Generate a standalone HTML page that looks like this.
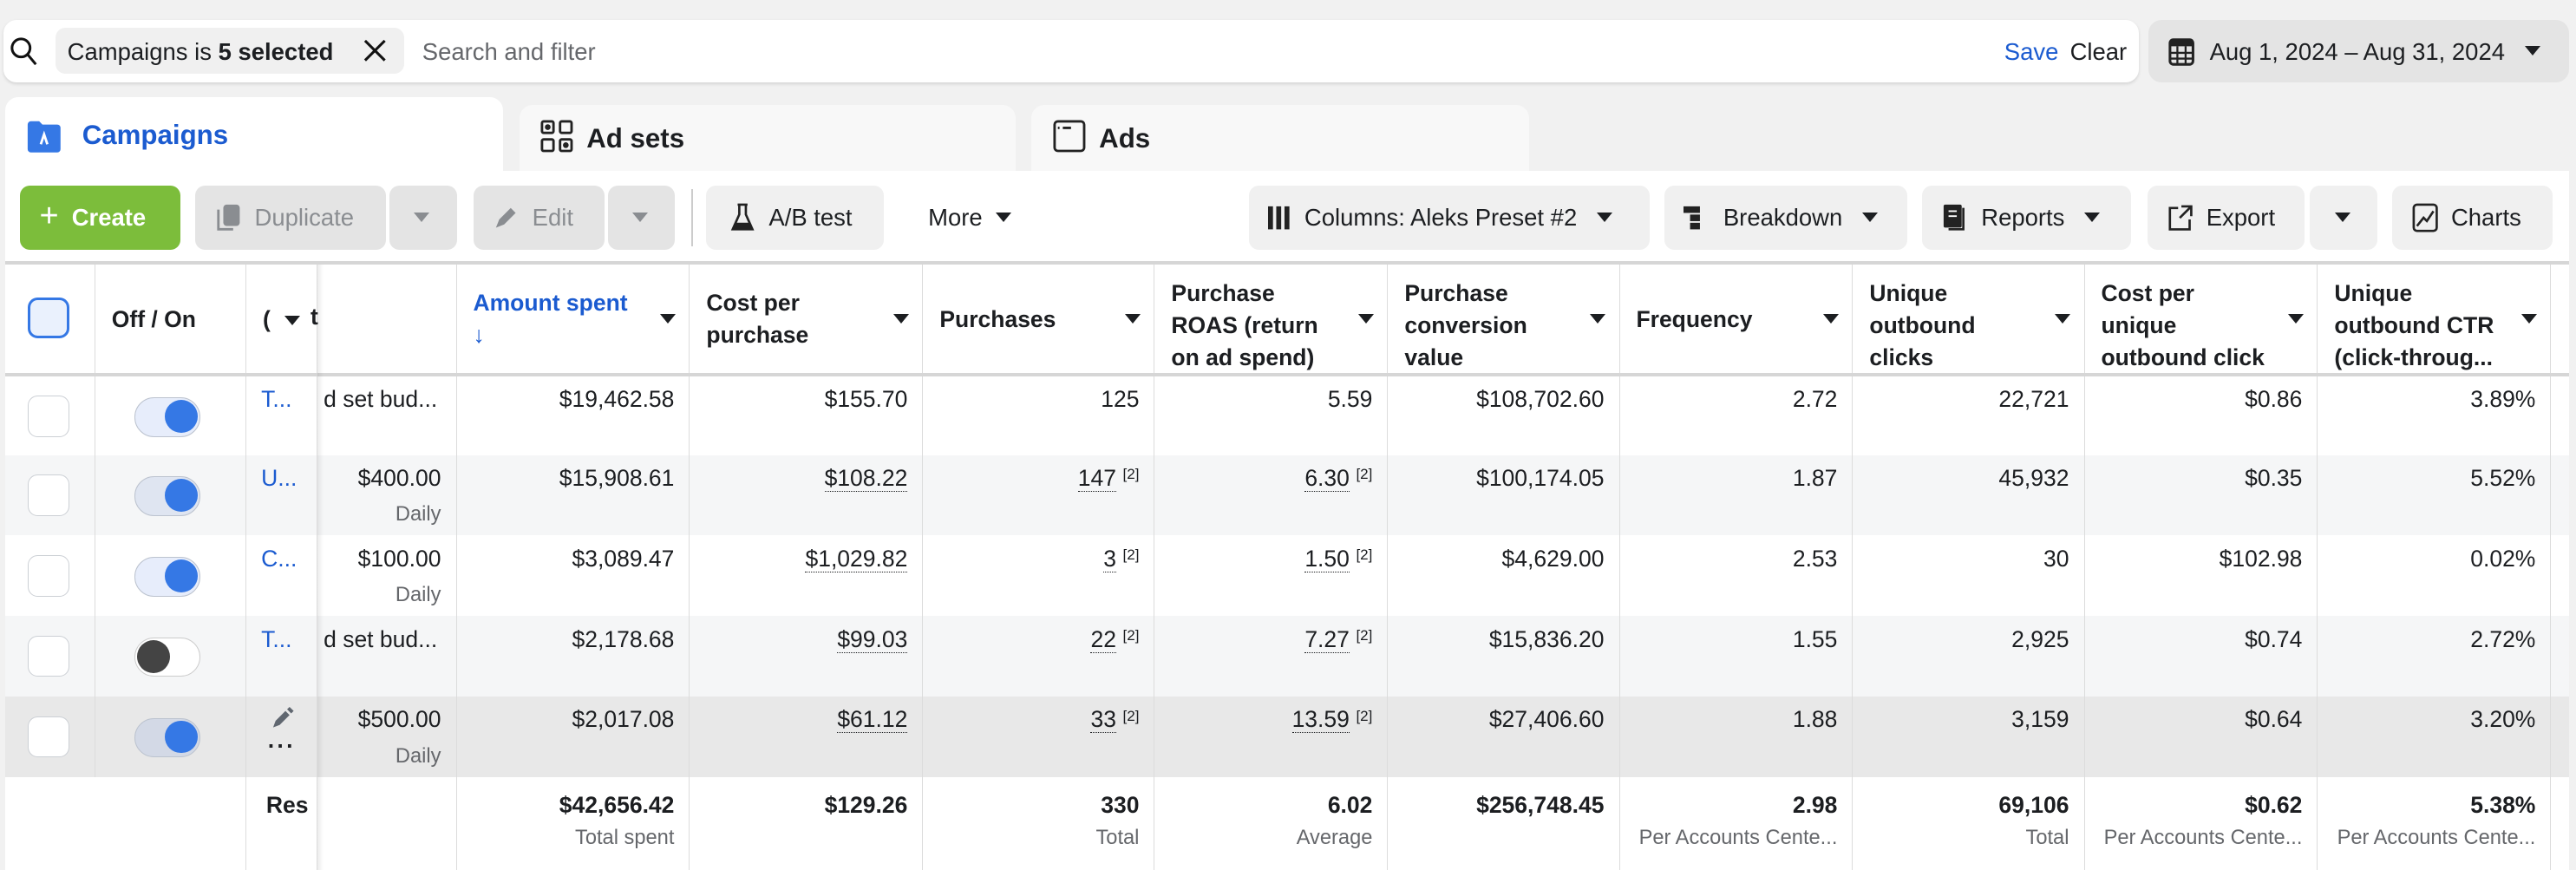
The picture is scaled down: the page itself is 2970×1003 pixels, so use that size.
<!DOCTYPE html>
<html><head><meta charset="utf-8"><style>
*{box-sizing:border-box;margin:0;padding:0}
html,body{width:2970px;height:1003px;overflow:hidden;background:#f1f1f1}
#r{zoom:1.8941;width:1568px;height:530px;position:relative;font-family:"Liberation Sans",sans-serif;font-size:14px;color:#1c1e21}
.a{position:absolute}
.btn{position:absolute;top:113px;height:39px;border-radius:6px;background:#f0f0f0;display:flex;align-items:center;padding-left:12px;font-size:14.5px;color:#1c1e21;gap:8px}
.dis{background:#e4e4e4;color:#8a8d91}
.tri{display:inline-block;width:0;height:0;border-left:5px solid transparent;border-right:5px solid transparent;border-top:6px solid #1c1e21}
.row{position:absolute;left:3px;display:flex;width:1561px}
.c{border-right:1px solid #dcdcdc;height:100%;position:relative;flex:none}
.num{text-align:right;padding:6px 9px 0 0}
.h{font-weight:bold;padding:8px 8px 0 10px;line-height:19.5px;overflow:hidden;height:100%}
.h .tri{position:absolute;right:8px;top:30px}
.u{border-bottom:1px dotted #1c1e21}
sup{font-size:9px;margin-left:4px;vertical-align:4px}
.sub{font-size:12.5px;color:#65676b;margin-top:7px}
.cb{position:absolute;left:14px;top:12px;width:25px;height:25px;border:1px solid #ccd0d5;border-radius:6px;background:#fff}
.tg{position:absolute;left:24px;top:13px;width:40px;height:24px;border-radius:12px;background:#e7edfb;border:1px solid #bcc3cf}
.tg i{position:absolute;right:1px;top:1px;width:20px;height:20px;border-radius:50%;background:#3578e5}
.nm{color:#1b5bd0;padding:6px 0 0 9px}
</style></head><body><div id="r">
<div class="a" style="left:2px;top:12px;width:1300px;height:38px;background:#fff;border-radius:8px;box-shadow:0 1px 2px rgba(0,0,0,.12)"></div>
<svg class="a" style="left:6px;top:22px" width="18" height="20" viewBox="0 0 18 20"><circle cx="7" cy="7" r="5.5" fill="none" stroke="#111" stroke-width="1.6"/><path d="M11 11l5 6" stroke="#111" stroke-width="1.6"/></svg>
<div class="a" style="left:34px;top:17px;width:212px;height:28px;background:#f0f0f0;border-radius:6px;padding:6px 0 0 7px;font-size:14.5px">Campaigns is <b>5 selected</b></div>
<svg class="a" style="left:221px;top:24px" width="14" height="14"><path d="M1 1l12 12M13 1L1 13" stroke="#111" stroke-width="1.6"/></svg>
<div class="a" style="left:257px;top:23px;color:#65676b;font-size:14.5px">Search and filter</div>
<div class="a" style="left:1220px;top:23px;color:#1b5bd0;font-size:14.5px">Save</div>
<div class="a" style="left:1260px;top:23px;font-size:14.5px">Clear</div>
<div class="a" style="left:1308px;top:12px;width:256px;height:38px;background:#e4e4e4;border-radius:8px"></div>
<svg class="a" style="left:1320px;top:22px" width="16" height="18"><rect x="1" y="2" width="14" height="15" rx="2" fill="none" stroke="#222" stroke-width="1.6"/><rect x="1" y="2" width="14" height="4" fill="#222"/><path d="M1 10h14M1 13.5h14M5.5 6v11M10.5 6v11" stroke="#222" stroke-width="1.2"/></svg>
<div class="a" style="left:1345px;top:23px;font-size:14.5px">Aug 1, 2024 – Aug 31, 2024</div>
<span class="tri a" style="left:1537px;top:28px"></span>
<div class="a" style="left:3px;top:59px;width:303px;height:50px;background:#fff;border-radius:8px 8px 0 0"></div>
<svg class="a" style="left:16px;top:72px" width="22" height="22"><path d="M1 4a2 2 0 0 1 2-2h5l2 2h9a2 2 0 0 1 2 2v13a2 2 0 0 1-2 2H3a2 2 0 0 1-2-2z" fill="#3578e5"/><path d="M9 16l2-6 2 6" stroke="#fff" stroke-width="1.5" fill="none"/></svg>
<div class="a" style="left:50px;top:73px;font-size:16.5px;font-weight:bold;color:#1b5bd0">Campaigns</div>
<div class="a" style="left:316px;top:64px;width:302px;height:40px;background:#f8f8f8;border-radius:8px 8px 0 0"></div>
<svg class="a" style="left:329px;top:73px" width="20" height="20" fill="none" stroke="#222" stroke-width="1.5"><rect x="1" y="1" width="7" height="7" rx="1"/><rect x="12" y="1" width="7" height="7" rx="1"/><rect x="1" y="12" width="7" height="7" rx="1"/><rect x="12" y="12" width="7" height="7" rx="1"/><circle cx="4.5" cy="4.5" r="1" fill="#222"/><circle cx="15.5" cy="15.5" r="1" fill="#222"/></svg>
<div class="a" style="left:357px;top:75px;font-size:16.5px;font-weight:bold">Ad sets</div>
<div class="a" style="left:628px;top:64px;width:303px;height:40px;background:#f8f8f8;border-radius:8px 8px 0 0"></div>
<svg class="a" style="left:641px;top:73px" width="20" height="20" fill="none" stroke="#222" stroke-width="1.5"><rect x="1" y="1" width="18" height="18" rx="2"/><path d="M3 5h1M6 5h5"/></svg>
<div class="a" style="left:669px;top:75px;font-size:16.5px;font-weight:bold">Ads</div>
<div class="a" style="left:3px;top:104px;width:1561px;height:426px;background:#fff"></div>
<div class="btn" style="left:12px;width:98px;background:#7cbd3b;color:#fff;font-weight:bold"><span style="font-size:20px;font-weight:normal;margin-top:-2px">+</span>Create</div>
<div class="btn dis" style="left:119px;width:116px"><svg width="16" height="18"><rect x="5" y="1" width="10" height="13" rx="2" fill="#8a8d91"/><path d="M2 4v12h9" stroke="#8a8d91" stroke-width="1.5" fill="none"/></svg>Duplicate</div>
<div class="btn dis" style="left:237px;width:41px;padding-left:15px"><span class="tri" style="border-top-color:#8a8d91"></span></div>
<div class="btn dis" style="left:288px;width:80px"><svg width="16" height="16"><path d="M2 14l2-5 7-7 3 3-7 7z" fill="#8a8d91"/></svg>Edit</div>
<div class="btn dis" style="left:370px;width:41px;padding-left:15px"><span class="tri" style="border-top-color:#8a8d91"></span></div>
<div class="a" style="left:421px;top:115px;width:1px;height:35px;background:#ccc"></div>
<div class="btn" style="left:430px;width:108px;padding-left:14px"><svg width="16" height="18"><path d="M5 1h6M6 1v6l-4 9h12l-4-9V1" fill="none" stroke="#222" stroke-width="1.4"/><path d="M3.5 12h9l1.5 4H2z" fill="#222"/></svg>A/B test</div>
<div class="btn" style="left:549px;width:83px;background:none;padding-left:16px">More <span class="tri"></span></div>
<div class="btn" style="left:760px;width:244px"><svg width="14" height="16"><rect x="0" y="1" width="3" height="14" fill="#222"/><rect x="5" y="1" width="3" height="14" fill="#222"/><rect x="10" y="1" width="3" height="14" fill="#222"/></svg>Columns: Aleks Preset #2 <span class="tri" style="margin-left:4px"></span></div>
<div class="btn" style="left:1013px;width:148px"><svg width="16" height="16"><rect x="0" y="1" width="10" height="4" fill="#222"/><rect x="4" y="6" width="6" height="4" fill="#222"/><rect x="4" y="11" width="6" height="4" fill="#222"/></svg>Breakdown <span class="tri" style="margin-left:4px"></span></div>
<div class="btn" style="left:1170px;width:127px"><svg width="16" height="18"><rect x="1" y="1" width="11" height="14" rx="1" fill="#222"/><path d="M13 3v13H4" stroke="#222" stroke-width="1.4" fill="none"/><path d="M4 5h5M4 8h5" stroke="#fff"/></svg>Reports <span class="tri" style="margin-left:4px"></span></div>
<div class="btn" style="left:1307px;width:96px"><svg width="16" height="16" fill="none" stroke="#222" stroke-width="1.4"><path d="M7 2H2v13h12V9"/><path d="M9 1h6v6M15 1L8 8"/></svg>Export</div>
<div class="btn" style="left:1406px;width:41px;padding-left:15px"><span class="tri"></span></div>
<div class="btn" style="left:1456px;width:98px"><svg width="16" height="18" fill="none" stroke="#222" stroke-width="1.4"><rect x="1" y="1" width="14" height="16" rx="2"/><path d="M3 14l4-5 2 2 4-6"/></svg>Charts</div>
<div class="a" style="left:3px;top:159px;width:1561px;height:2px;background:#d6d6d6"></div>
<div class="a" style="left:3px;top:227px;width:1561px;height:2px;background:#d6d6d6"></div>
<div class="row" style="top:161px;height:66px">
<div class="c" style="width:55px"><div class="cb" style="border:2px solid #3578e5;background:#eaf1fd;top:20px"></div></div>
<div class="c h" style="width:92px;padding-top:24px">Off / On</div>
<div class="c h" style="width:43px;padding-top:24px">(<span class="tri" style="top:31px;right:10px"></span></div>
<div class="c" style="width:85px"><span style="position:absolute;left:-4px;top:24px;font-weight:bold">t</span></div>
<div class="c h" style="width:142px;color:#1b5bd0;padding-top:14px">Amount spent<br>↓<span class="tri"></span></div>
<div class="c h" style="width:142px;padding-top:14px">Cost per<br>purchase<span class="tri"></span></div>
<div class="c h" style="width:141px;padding-top:24px">Purchases<span class="tri"></span></div>
<div class="c h" style="width:142px">Purchase<br>ROAS (return<br>on ad spend)<span class="tri"></span></div>
<div class="c h" style="width:141px">Purchase<br>conversion<br>value<span class="tri"></span></div>
<div class="c h" style="width:142px;padding-top:24px">Frequency<span class="tri"></span></div>
<div class="c h" style="width:141px">Unique<br>outbound<br>clicks<span class="tri"></span></div>
<div class="c h" style="width:142px">Cost per<br>unique<br>outbound click<span class="tri"></span></div>
<div class="c h" style="width:142px">Unique<br>outbound CTR<br>(click-throug...<span class="tri"></span></div>
<div class="c" style="width:11px;border:none"></div>
</div>

<div class="row" style="top:229px;height:48px;background:#fff">
<div class="c" style="width:55px"><div class="cb"></div></div>
<div class="c" style="width:92px"><div class="tg"><i></i></div></div>
<div class="c nm" style="width:43px">T...</div>
<div class="c" style="width:85px;padding:6px 0 0 4px;overflow:hidden;white-space:nowrap">d set bud...</div>
<div class="c num" style="width:142px">$19,462.58</div>
<div class="c num" style="width:142px">$155.70</div>
<div class="c num" style="width:141px">125</div>
<div class="c num" style="width:142px">5.59</div>
<div class="c num" style="width:141px">$108,702.60</div>
<div class="c num" style="width:142px">2.72</div>
<div class="c num" style="width:141px">22,721</div>
<div class="c num" style="width:142px">$0.86</div>
<div class="c num" style="width:142px">3.89%</div>
</div>

<div class="row" style="top:277px;height:49px;background:#f5f6f7">
<div class="c" style="width:55px"><div class="cb"></div></div>
<div class="c" style="width:92px"><div class="tg" style="background:#dfe5f1"><i></i></div></div>
<div class="c nm" style="width:43px">U...</div>
<div class="c num" style="width:85px">$400.00<div class="sub">Daily</div></div>
<div class="c num" style="width:142px">$15,908.61</div>
<div class="c num" style="width:142px"><span class="u">$108.22</span></div>
<div class="c num" style="width:141px"><span class="u">147</span><sup>[2]</sup></div>
<div class="c num" style="width:142px"><span class="u">6.30</span><sup>[2]</sup></div>
<div class="c num" style="width:141px">$100,174.05</div>
<div class="c num" style="width:142px">1.87</div>
<div class="c num" style="width:141px">45,932</div>
<div class="c num" style="width:142px">$0.35</div>
<div class="c num" style="width:142px">5.52%</div>
</div>

<div class="row" style="top:326px;height:49px;background:#fff">
<div class="c" style="width:55px"><div class="cb"></div></div>
<div class="c" style="width:92px"><div class="tg"><i></i></div></div>
<div class="c nm" style="width:43px">C...</div>
<div class="c num" style="width:85px">$100.00<div class="sub">Daily</div></div>
<div class="c num" style="width:142px">$3,089.47</div>
<div class="c num" style="width:142px"><span class="u">$1,029.82</span></div>
<div class="c num" style="width:141px"><span class="u">3</span><sup>[2]</sup></div>
<div class="c num" style="width:142px"><span class="u">1.50</span><sup>[2]</sup></div>
<div class="c num" style="width:141px">$4,629.00</div>
<div class="c num" style="width:142px">2.53</div>
<div class="c num" style="width:141px">30</div>
<div class="c num" style="width:142px">$102.98</div>
<div class="c num" style="width:142px">0.02%</div>
</div>

<div class="row" style="top:375px;height:49px;background:#f5f6f7">
<div class="c" style="width:55px"><div class="cb"></div></div>
<div class="c" style="width:92px"><div class="tg" style="background:#fff;border-color:#ccc"><i style="left:1px;right:auto;background:#444"></i></div></div>
<div class="c nm" style="width:43px">T...</div>
<div class="c" style="width:85px;padding:6px 0 0 4px;overflow:hidden;white-space:nowrap">d set bud...</div>
<div class="c num" style="width:142px">$2,178.68</div>
<div class="c num" style="width:142px"><span class="u">$99.03</span></div>
<div class="c num" style="width:141px"><span class="u">22</span><sup>[2]</sup></div>
<div class="c num" style="width:142px"><span class="u">7.27</span><sup>[2]</sup></div>
<div class="c num" style="width:141px">$15,836.20</div>
<div class="c num" style="width:142px">1.55</div>
<div class="c num" style="width:141px">2,925</div>
<div class="c num" style="width:142px">$0.74</div>
<div class="c num" style="width:142px">2.72%</div>
</div>

<div class="row" style="top:424px;height:49px;background:#e8e8e8">
<div class="c" style="width:55px"><div class="cb"></div></div>
<div class="c" style="width:92px"><div class="tg" style="background:#d3d9e6"><i></i></div></div>
<div class="c" style="width:43px"><svg style="position:absolute;left:15px;top:6px" width="14" height="14"><path d="M1 13l1.5-4 6-6 2.5 2.5-6 6z M9.5 2l1.5-1.5 2.5 2.5-1.5 1.5z" fill="#606770"/></svg><span style="position:absolute;left:13px;top:22px;font-weight:bold;letter-spacing:1px">···</span></div>
<div class="c num" style="width:85px">$500.00<div class="sub">Daily</div></div>
<div class="c num" style="width:142px">$2,017.08</div>
<div class="c num" style="width:142px"><span class="u">$61.12</span></div>
<div class="c num" style="width:141px"><span class="u">33</span><sup>[2]</sup></div>
<div class="c num" style="width:142px"><span class="u">13.59</span><sup>[2]</sup></div>
<div class="c num" style="width:141px">$27,406.60</div>
<div class="c num" style="width:142px">1.88</div>
<div class="c num" style="width:141px">3,159</div>
<div class="c num" style="width:142px">$0.64</div>
<div class="c num" style="width:142px">3.20%</div>
</div>

<div class="row" style="top:473px;height:57px;background:#fff;font-weight:bold">
<div class="c" style="width:55px;border:none"></div>
<div class="c" style="width:92px"></div>
<div class="c" style="width:43px;padding:9px 0 0 12px;overflow:hidden">Res</div>
<div class="c" style="width:85px"></div>
<div class="c num" style="width:142px;padding-top:9px">$42,656.42<div class="sub" style="font-weight:normal;margin-top:5px">Total spent</div></div>
<div class="c num" style="width:142px;padding-top:9px">$129.26</div>
<div class="c num" style="width:141px;padding-top:9px">330<div class="sub" style="font-weight:normal;margin-top:5px">Total</div></div>
<div class="c num" style="width:142px;padding-top:9px">6.02<div class="sub" style="font-weight:normal;margin-top:5px">Average</div></div>
<div class="c num" style="width:141px;padding-top:9px">$256,748.45</div>
<div class="c num" style="width:142px;padding-top:9px">2.98<div class="sub" style="font-weight:normal;white-space:nowrap;margin-top:5px">Per Accounts Cente...</div></div>
<div class="c num" style="width:141px;padding-top:9px">69,106<div class="sub" style="font-weight:normal;margin-top:5px">Total</div></div>
<div class="c num" style="width:142px;padding-top:9px">$0.62<div class="sub" style="font-weight:normal;white-space:nowrap;margin-top:5px">Per Accounts Cente...</div></div>
<div class="c num" style="width:142px;padding-top:9px">5.38%<div class="sub" style="font-weight:normal;white-space:nowrap;margin-top:5px">Per Accounts Cente...</div></div>
</div>
<div class="a" style="left:193px;top:161px;width:4px;height:369px;background:linear-gradient(90deg,rgba(0,0,0,.08),rgba(0,0,0,0))"></div>
</div></body></html>
